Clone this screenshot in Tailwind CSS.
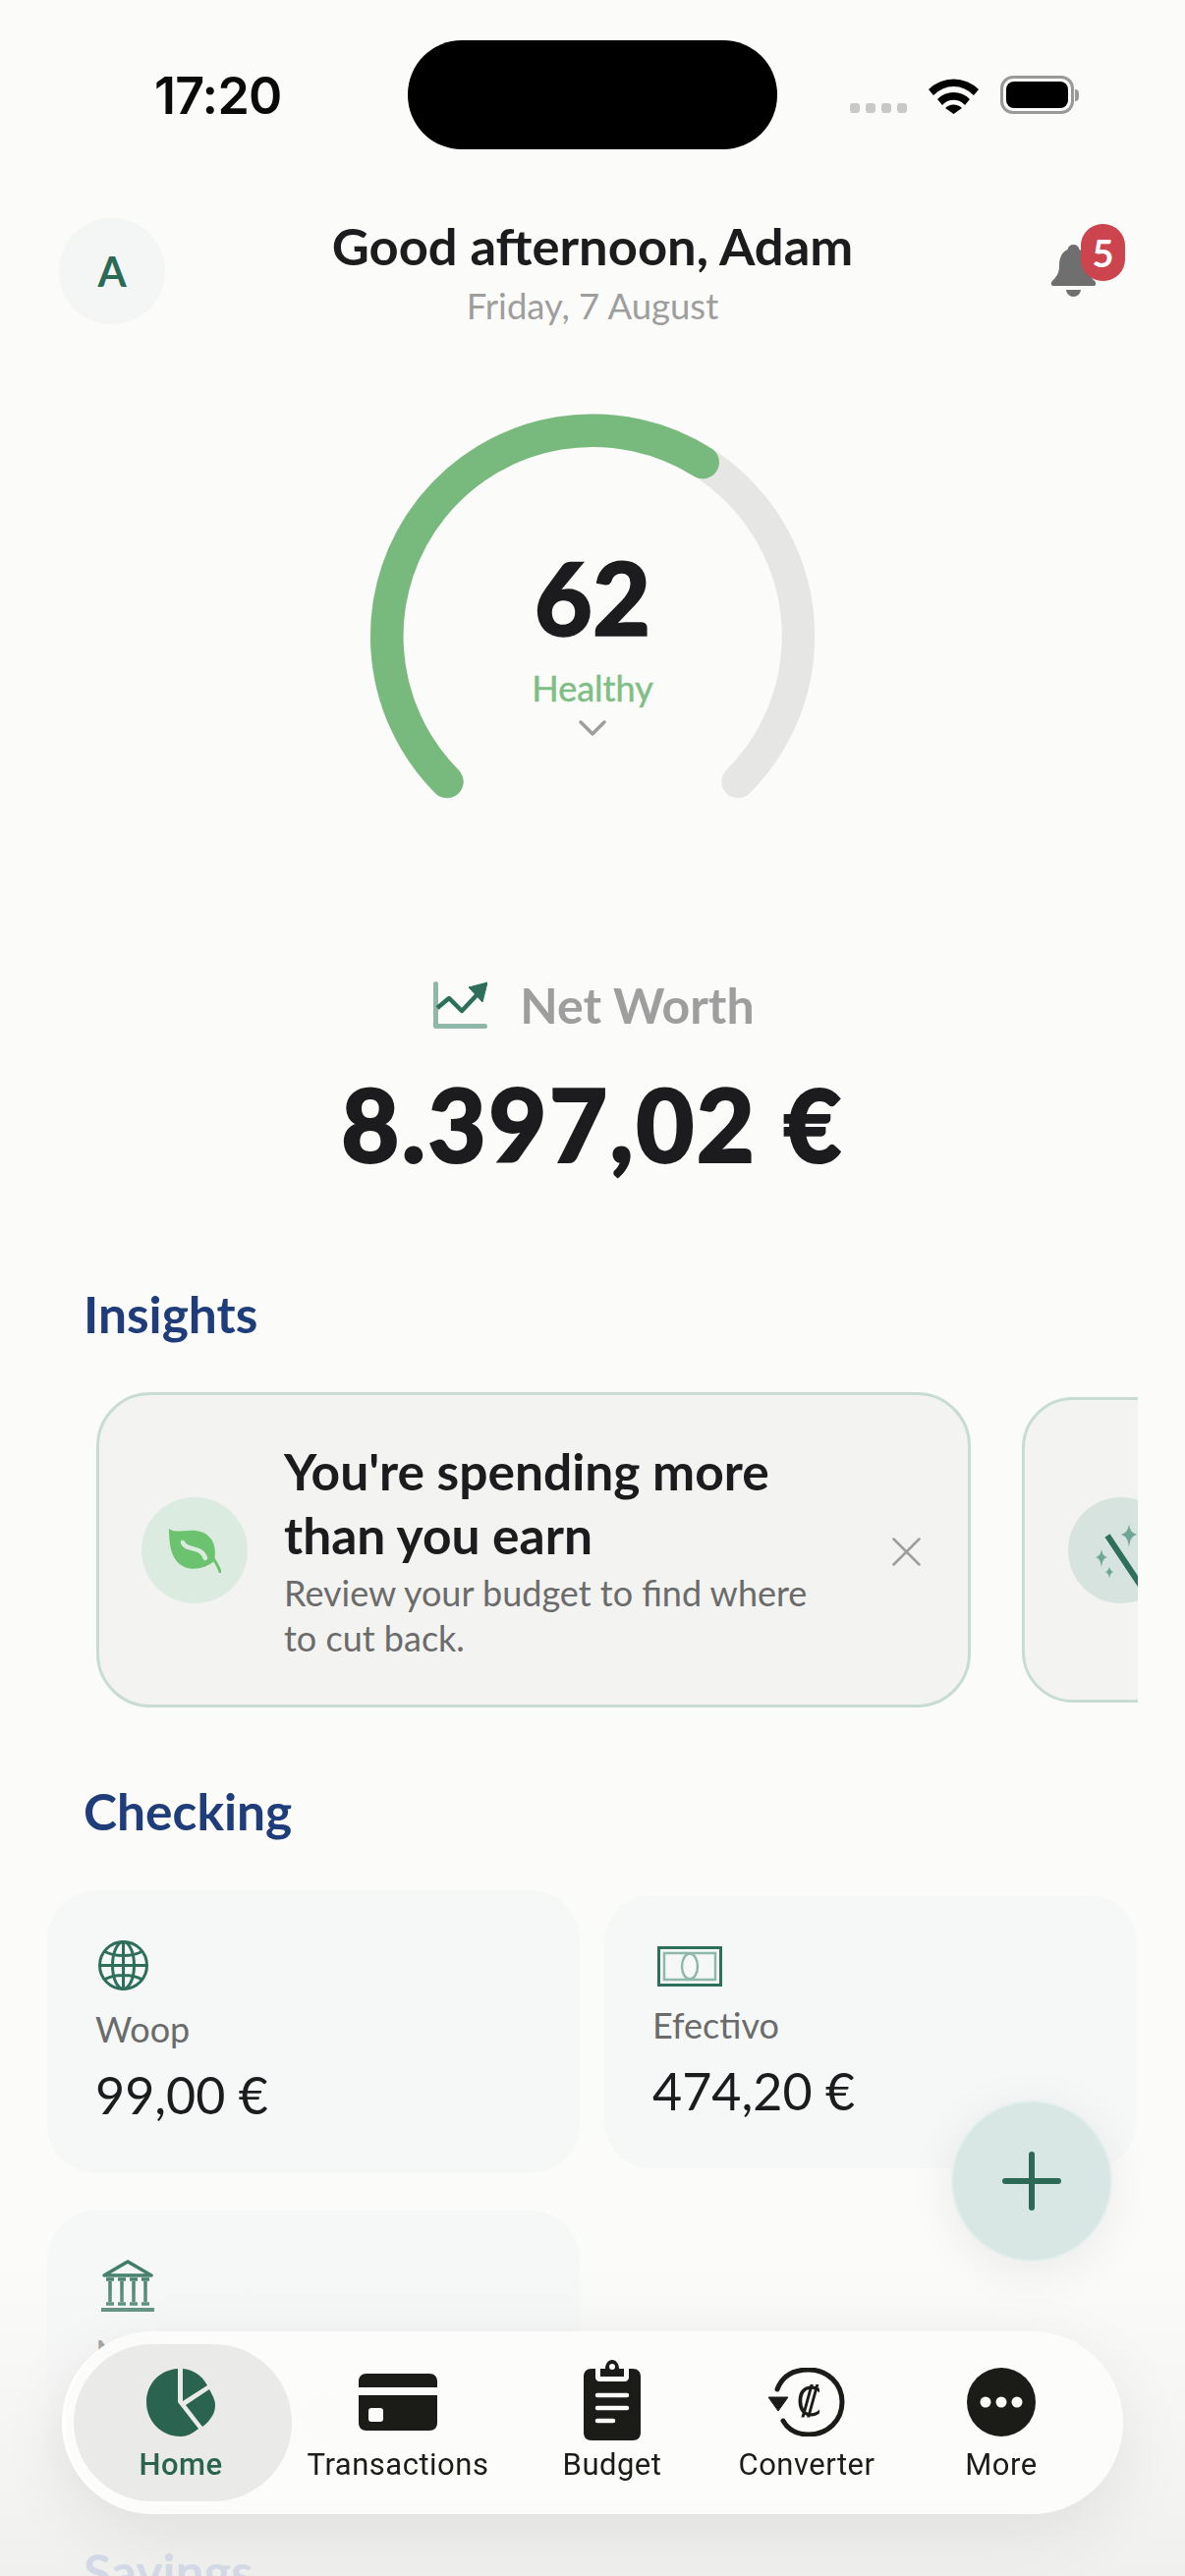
<!DOCTYPE html>
<html lang="en">
<head>
<meta charset="UTF-8">
<title>Home</title>
<script src="https://cdn.jsdelivr.net/npm/@tailwindcss/browser@4"></script>
</head>
<body class="bg-[#fbfbf9]">
<div class="relative w-[1206px] h-[2622px] overflow-hidden bg-[#fbfbf9] font-['Lato',sans-serif] text-[#1c1c1e]">

  <!-- status bar -->
  <div class="flex items-center h-[111px] mt-[41px]">
    <div class="w-[415px] pl-[157px] font-['Inter',sans-serif] font-semibold text-[52px] leading-none tracking-[-0.8px] text-[#0a0a0a] mt-[3px]">17:20</div>
    <div class="w-[376px] h-[111px] rounded-[55px] bg-black"></div>
    <div class="flex gap-[6px] ml-[74px] mt-[26px]">
      <span class="w-[10px] h-[10px] rounded-[3px] bg-[#c9c9c8]"></span>
      <span class="w-[10px] h-[10px] rounded-[3px] bg-[#c9c9c8]"></span>
      <span class="w-[10px] h-[10px] rounded-[3px] bg-[#c9c9c8]"></span>
      <span class="w-[10px] h-[10px] rounded-[3px] bg-[#c9c9c8]"></span>
    </div>
    <svg class="ml-[22px] mt-[1px]" width="51" height="37" viewBox="0 0 51 37">
      <path d="M0 12 A36 36 0 0 1 51 12 L46 18 A28 28 0 0 0 5 18 Z M9 22 A23 23 0 0 1 42 22 L37 28 A15 15 0 0 0 14 28 Z M17 31 A12 12 0 0 1 34 31 L25.500 37 Z" fill="#000"/>
    </svg>
    <div class="ml-[22px] flex items-center">
      <div class="w-[75px] h-[39px] rounded-[13px] border-[3px] border-[#999] p-[3px]"><div class="w-full h-full rounded-[8px] bg-black"></div></div>
      <div class="w-[4px] h-[12px] bg-[#999] rounded-r-[4px] ml-[1px]"></div>
    </div>
  </div>

  <!-- header -->
  <div class="grid grid-cols-[108px_1fr_108px] px-[60px] mt-[70px] h-[108px]">
    <div class="w-[108px] h-[108px] rounded-full bg-[#f3f6f5] flex items-center justify-center text-[42px] font-bold text-[#2d6a55]">A</div>
    <div class="flex flex-col items-center">
      <div class="text-[52.500px] leading-[62px] font-bold mt-[-3px]">Good afternoon, Adam</div>
      <div class="text-[36.500px] leading-[44px] text-[#9e9e9e] mt-[8px]">Friday, 7 August</div>
    </div>
    <div class="relative">
      <svg class="absolute left-[31px] top-[27px]" width="47" height="53" viewBox="0 0 47 53" fill="#6f6f6f">
        <path d="M23.500 0 C27 0 29 2 29.500 5 C36 8 38 14 38 22 C38 29 41 33 45 37 C47 39 46.500 42 44 42 L3 42 C0.500 42 0 39 2 37 C6 33 9 29 9 22 C9 14 11 8 17.500 5 C18 2 20 0 23.500 0 Z"/>
        <path d="M16 46 L31 46 C30.500 50 27.500 53 23.500 53 C19.500 53 16.500 50 16 46 Z"/>
      </svg>
      <div class="absolute left-[62px] top-[6px] w-[45px] h-[58px] rounded-[22px] bg-[#cc444e] text-white text-[38px] font-bold flex items-center justify-center">5</div>
    </div>
  </div>

  <!-- gauge -->
  <div class="relative w-[500px] h-[420px] mx-auto mt-[70px]">
    <svg width="500" height="420" viewBox="353 400 500 420" fill="none" stroke-width="33.500" stroke-linecap="round">
      <path d="M454.900 795.600 A209.500 209.500 0 1 1 751.100 795.600" stroke="#e6e6e4"/>
      <path d="M454.900 795.600 A209.500 209.500 0 0 1 715.200 470.600" stroke="#78ba7e"/>
    </svg>
    <div class="absolute inset-x-0 top-[152px] text-center text-[102px] leading-[112px] font-black [-webkit-text-stroke:1.500px_#1c1c1e]">62</div>
    <div class="absolute inset-x-0 top-[278px] text-center text-[36px] leading-[44px] text-[#7fbf85] [-webkit-text-stroke:0.500px_#7fbf85]">Healthy</div>
    <svg class="absolute left-[236px] top-[333px]" width="28" height="17" viewBox="0 0 28 17" fill="none" stroke="#9e9e9e" stroke-width="3.500" stroke-linecap="round" stroke-linejoin="round"><path d="M2 2 L14 14 L26 2"/></svg>
  </div>

  <!-- net worth -->
  <div class="flex items-center justify-center gap-[33px] mt-[179px] h-[48px] pl-[3px]">
    <svg width="55" height="48" viewBox="0 0 55 48" fill="none">
      <path d="M2.500 2.500 L2.500 45.500 L52.500 45.500" stroke="#8fb8ab" stroke-width="5" stroke-linecap="round" stroke-linejoin="round"/>
      <path d="M4 27 L16 17 L29 30 L44 14" stroke="#2d6f5a" stroke-width="4.500" stroke-linejoin="round"/>
      <path d="M36 6 L55 1 L50 21 Z" fill="#2d6f5a" stroke="#2d6f5a" stroke-width="1" stroke-linejoin="round"/>
    </svg>
    <div class="text-[50px] leading-none font-bold text-[#9e9e9e]">Net Worth</div>
  </div>
  <div class="text-center text-[102px] leading-[110px] font-black tracking-[2.500px] [-webkit-text-stroke:2px_#1c1c1e] mt-[42px]">8.397,02 €</div>

  <!-- insights -->
  <div class="ml-[85px] mt-[108px] text-[51.500px] leading-[60px] font-bold text-[#1f3d7a]">Insights</div>
  <div class="flex items-center gap-[52px] ml-[60px] w-[1098px] h-[323px] mt-[49px] overflow-hidden pl-[38px]">
    <div class="shrink-0 w-[890px] h-[321px] rounded-[55px] border-[3px] border-[#c8dcd6] bg-[#f3f3f2] flex items-center pl-[43px] relative">
      <div class="shrink-0 w-[108px] h-[108px] rounded-full bg-[#dcebdf] flex items-center justify-center">
        <svg width="54" height="46" viewBox="0 0 54 46" fill="none">
          <path d="M1 1 C8 7 20 0 33 4 C46 8 50 20 47 34 C36 43 18 46 8 33 C2 25 1 12 1 1 Z" fill="#6cc36f"/>
          <path d="M44 28 C47 33 51 38 53 45" stroke="#6cc36f" stroke-width="3" stroke-linecap="round"/>
          <path d="M15 15 C18 24 34 18 38 31" stroke="#dcebdf" stroke-width="4.500" stroke-linecap="round"/>
        </svg>
      </div>
      <div class="ml-[37px] w-[600px]">
        <div class="text-[51.500px] leading-[65px] font-bold">You're spending more<br>than you earn</div>
        <div class="text-[36px] leading-[46px] text-[#6b6b6b] mt-[3px]">Review your budget to find where<br>to cut back.</div>
      </div>
      <svg class="absolute left-[807px] top-[145px]" width="29" height="29" viewBox="0 0 29 29" stroke="#9e9e9e" stroke-width="2.500" stroke-linecap="round"><path d="M1.500 1.500 L27.500 27.500 M27.500 1.500 L1.500 27.500"/></svg>
    </div>
    <div class="shrink-0 w-[890px] h-[311px] rounded-[52px] border-[3px] border-[#c8dcd6] bg-[#f3f3f2] flex items-center pl-[44px]">
      <div class="relative shrink-0 w-[108px] h-[108px] rounded-full bg-[#d6e3df]">
        <svg class="absolute left-[24px] top-[27px]" width="84" height="64" viewBox="0 0 84 64" fill="none">
          <path d="M16 12 L56 72" stroke="#2d6f5a" stroke-width="6"/>
          <path d="M38 0 C39 7 41 9 46 11 C41 13 39 15 38 24 C37 15 35 13 30 11 C35 9 37 7 38 0 Z" fill="#6fa698"/>
          <path d="M10 26 C11 31 12 33 16 34 C12 35 11 38 10 44 C9 38 8 35 4 34 C8 33 9 31 10 26 Z" fill="#6fa698"/>
          <path d="M18 44 C19 47 20 48 22 49 C20 50 19 51 18 55 C17 51 16 50 14 49 C16 48 17 47 18 44 Z" fill="#6fa698"/>
        </svg>
      </div>
    </div>
  </div>

  <!-- checking -->
  <div class="ml-[85px] mt-[74px] text-[51.500px] leading-[60px] font-bold text-[#1f3d7a]">Checking</div>
  <div class="grid grid-cols-[542px_542px] gap-x-[25px] ml-[48px] mt-[51px] items-center">
    <div class="h-[288px] rounded-[50px] bg-[#f6f8f8] pl-[49px] pt-[51px]">
      <svg class="ml-[3px]" width="51" height="51" viewBox="0 0 51 51" fill="none" stroke="#2d6f5a" stroke-width="3">
        <circle cx="25.500" cy="25.500" r="24"/>
        <ellipse cx="25.500" cy="25.500" rx="11" ry="24"/>
        <path d="M1.500 25.500 H49.500 M25.500 1.500 V49.500 M6 11 C16 17 35 17 45 11 M6 40 C16 34 35 34 45 40"/>
      </svg>
      <div class="text-[36px] leading-[44px] text-[#6b6b6b] mt-[17px]">Woop</div>
      <div class="text-[52px] leading-[58px] mt-[16px]">99,00 €</div>
    </div>
    <div class="h-[278px] rounded-[48px] bg-[#f6f8f8] pl-[49px] pt-[52px]">
      <svg class="ml-[5px]" width="66" height="41" viewBox="0 0 66 41" fill="none">
        <rect x="1.500" y="1.500" width="63" height="38" stroke="#2d6f5a" stroke-width="3"/>
        <rect x="7" y="7" width="52" height="27" stroke="#8fb8ab" stroke-width="2.500"/>
        <ellipse cx="33" cy="20.500" rx="8" ry="13" stroke="#8fb8ab" stroke-width="2.500"/>
      </svg>
      <div class="text-[36px] leading-[44px] text-[#6b6b6b] mt-[17px]">Efectivo</div>
      <div class="text-[52px] leading-[58px] mt-[16px]">474,20 €</div>
    </div>
    <div class="h-[288px] rounded-[50px] bg-[#f6f8f8] pl-[49px] pt-[50px] mt-[38px]">
      <svg class="ml-[5px]" width="56" height="53" viewBox="0 0 56 53" fill="none" stroke="#2d6f5a" stroke-width="3.500">
        <path d="M4 16 L28 2 L52 16 Z" stroke-linejoin="round"/>
        <path d="M10 22 V43 M22 22 V43 M34 22 V43 M46 22 V43 M6 20 H14 M18 20 H26 M30 20 H38 M42 20 H50 M6 45 H14 M18 45 H26 M30 45 H38 M42 45 H50"/>
        <path d="M1 51 H55" stroke-width="4"/>
      </svg>
      <div class="text-[36px] leading-[44px] text-[#6b6b6b] mt-[19px]">N26</div>
      <div class="text-[52px] leading-[58px] mt-[16px]">2.054,32 €</div>
    </div>
  </div>
  <div class="relative z-10 ml-[85px] mt-[49px] text-[51.500px] leading-[60px] font-bold text-[#d3d9e4]">Savings</div>

  <!-- fade under the tab bar -->
  <div class="absolute inset-x-0 bottom-0 h-[340px] bg-linear-to-b from-[#fbfbf9]/0 via-[#f4f4f2]/70 to-[#eeeeec]/85"></div>

  <!-- add button -->
  <div class="absolute left-[968px] top-[2138px] w-[164px] h-[164px] rounded-full bg-[#d9e7e4] border-[2px] border-[#e2f0ed] shadow-[0_8px_50px_rgba(0,0,0,0.07)] flex items-center justify-center">
    <svg width="60" height="60" viewBox="0 0 60 60" stroke="#2d6a55" stroke-width="6" stroke-linecap="round"><path d="M30 3 V57 M3 30 H57"/></svg>
  </div>

  <!-- tab bar -->
  <div class="absolute left-[63px] top-[2373px] w-[1080px] h-[186px] rounded-[93px] bg-[#fcfcfa]/95 backdrop-blur-sm border-l-[3px] border-white/80 shadow-[0_20px_70px_rgba(0,0,0,0.08)] flex items-start pt-[29px] font-['Roboto',sans-serif] text-[31px] leading-[36px] tracking-[0.5px] text-[#1b1b18]">
    <div class="absolute left-[9px] top-[13px] w-[222px] h-[160px] rounded-[80px] bg-[#e8e9e6]/90"></div>
    <div class="relative w-[236px] flex flex-col items-center text-[#2a6450] font-medium">
      <div class="h-[82px] pt-[8px]">
        <svg class="block" width="70" height="70" viewBox="0 0 70 70">
          <path d="M32 1 V35 L53 62 C47 67 41 70 35 70 C15 70 0 54 0 35 C0 16 14 2 32 1 Z" fill="#2a6450"/>
          <path d="M37 1 C47 2 56 7 62 18 L37 34 Z" fill="#2a6450"/>
          <path d="M64 22 C68 29 70 34 70 38 C70 46 66 53 57 60 L40 38 Z" fill="#2a6450"/>
        </svg>
      </div>
      <span class="mt-[7px]">Home</span>
    </div>
    <div class="relative w-[206px] flex flex-col items-center">
      <div class="h-[82px] pt-[14px]">
        <svg class="block" width="80" height="58" viewBox="0 0 80 58">
          <path d="M0 14 V8 C0 3 3 0 8 0 H72 C77 0 80 3 80 8 V14 Z M0 22 H80 V50 C80 55 77 58 72 58 H8 C3 58 0 55 0 50 Z" fill="#1b1b18"/>
          <rect x="10" y="35" width="15" height="14" rx="3" fill="#fcfcfa"/>
        </svg>
      </div>
      <span class="mt-[7px]">Transactions</span>
    </div>
    <div class="relative w-[230px] flex flex-col items-center">
      <div class="h-[82px]">
        <svg class="block" width="58" height="82" viewBox="0 0 58 82">
          <path d="M8 9 H12 V18 C12 20 14 22 16 22 H42 C44 22 46 20 46 18 V9 H50 C55 9 58 12 58 17 V74 C58 79 55 82 50 82 H8 C3 82 0 79 0 74 V17 C0 12 3 9 8 9 Z" fill="#1b1b18"/>
          <path d="M17 9 H22 C22 4 25 0 29 0 C33 0 36 4 36 9 H41 V17 H17 Z" fill="#1b1b18"/>
          <circle cx="29" cy="7" r="3" fill="#fcfcfa"/>
          <path d="M14 36 H44 M14 49 H44 M14 62 H30" stroke="#fcfcfa" stroke-width="4.500" stroke-linecap="round"/>
        </svg>
      </div>
      <span class="mt-[7px]">Budget</span>
    </div>
    <div class="relative w-[166px] flex flex-col items-center">
      <div class="h-[82px] pt-[8px]">
        <div class="relative w-[78px] h-[70px]">
          <svg class="absolute inset-0" width="78" height="70" viewBox="0 0 78 70" fill="none">
            <path d="M9 22 C14 9 25 2 41 2 C60 2 75 16 75 35 C75 54 60 68 41 68 C29 68 20 63 15 54" stroke="#1b1b18" stroke-width="5" stroke-linecap="round"/>
            <path d="M0 30 H20 L10 44 Z" fill="#1b1b18" stroke="#1b1b18" stroke-width="1" stroke-linejoin="round"/>
          </svg>
          <span class="absolute inset-0 flex items-center justify-center pl-[4px] font-['DejaVu_Sans',sans-serif] text-[40px] leading-none tracking-normal">₡</span>
        </div>
      </div>
      <span class="mt-[7px]">Converter</span>
    </div>
    <div class="relative w-[230px] flex flex-col items-center">
      <div class="h-[82px] pt-[8px]">
        <svg class="block" width="70" height="70" viewBox="0 0 70 70">
          <circle cx="35" cy="35" r="35" fill="#1b1b18"/>
          <circle cx="19" cy="35" r="5.500" fill="#fcfcfa"/><circle cx="35" cy="35" r="5.500" fill="#fcfcfa"/><circle cx="51" cy="35" r="5.500" fill="#fcfcfa"/>
        </svg>
      </div>
      <span class="mt-[7px]">More</span>
    </div>
  </div>
</div>
</body>
</html>
